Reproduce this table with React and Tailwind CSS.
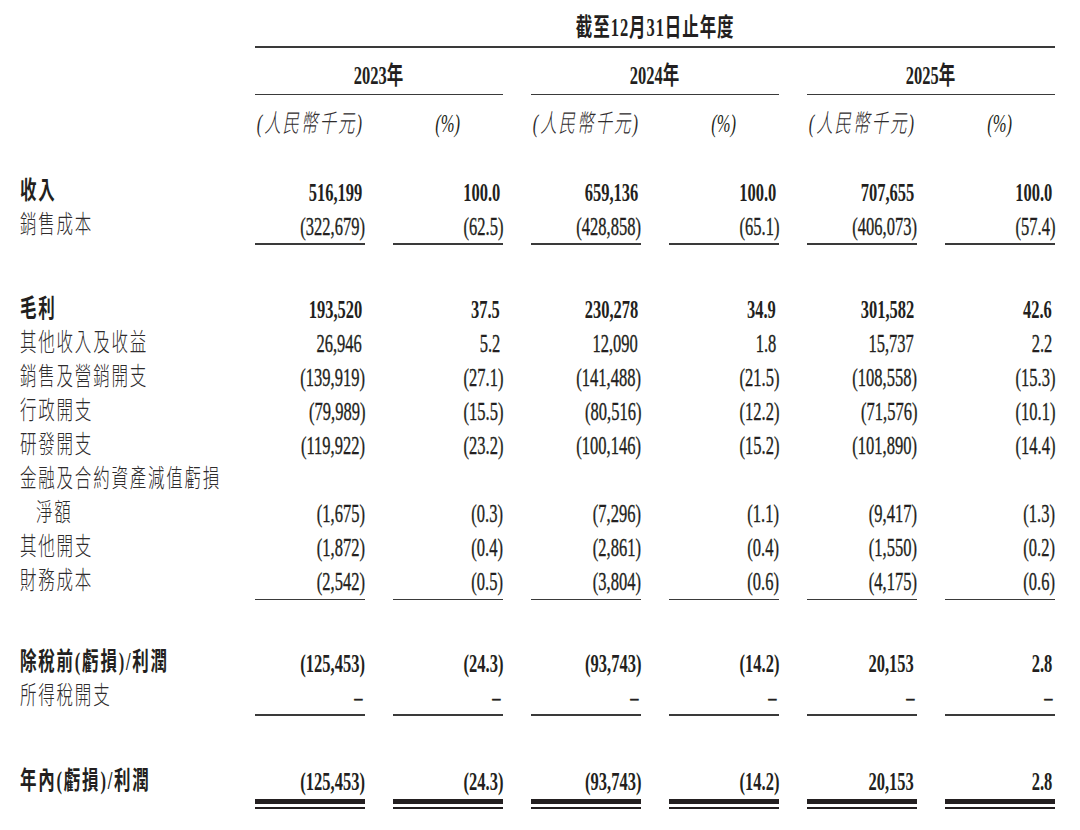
const rows1 = [
  { label: "收入", bold: true, v: ["516,199", "100.0", "659,136", "100.0", "707,655", "100.0"] },
  { label: "銷售成本", v: ["(322,679)", "(62.5)", "(428,858)", "(65.1)", "(406,073)", "(57.4)"] },
];

const rows2 = [
  { label: "毛利", bold: true, v: ["193,520", "37.5", "230,278", "34.9", "301,582", "42.6"] },
  { label: "其他收入及收益", v: ["26,946", "5.2", "12,090", "1.8", "15,737", "2.2"] },
  { label: "銷售及營銷開支", v: ["(139,919)", "(27.1)", "(141,488)", "(21.5)", "(108,558)", "(15.3)"] },
  { label: "行政開支", v: ["(79,989)", "(15.5)", "(80,516)", "(12.2)", "(71,576)", "(10.1)"] },
  { label: "研發開支", v: ["(119,922)", "(23.2)", "(100,146)", "(15.2)", "(101,890)", "(14.4)"] },
  { label: "金融及合約資產減值虧損", v: [] },
  { label: "淨額", indent: true, v: ["(1,675)", "(0.3)", "(7,296)", "(1.1)", "(9,417)", "(1.3)"] },
  { label: "其他開支", v: ["(1,872)", "(0.4)", "(2,861)", "(0.4)", "(1,550)", "(0.2)"] },
  { label: "財務成本", v: ["(2,542)", "(0.5)", "(3,804)", "(0.6)", "(4,175)", "(0.6)"] },
];

const rows3 = [
  { label: "除稅前(虧損)/利潤", bold: true, v: ["(125,453)", "(24.3)", "(93,743)", "(14.2)", "20,153", "2.8"] },
  { label: "所得稅開支", v: ["–", "–", "–", "–", "–", "–"] },
];

const rows4 = [
  { label: "年內(虧損)/利潤", bold: true, v: ["(125,453)", "(24.3)", "(93,743)", "(14.2)", "20,153", "2.8"] },
];

const grid = "grid grid-cols-[227px_repeat(6,110px)] gap-x-[28px]";

function Num({ v, bold }) {
  const paren = v.startsWith("(");
  return (
    <div className={`flex justify-end ${paren ? "pr-0" : "pr-[3px]"}`}>
      <span
        className={`inline-block origin-right scale-x-[0.66] whitespace-nowrap text-[25px] leading-none ${
          bold ? "font-bold" : "font-normal [-webkit-text-stroke:0.35px_#231f20]"
        }`}
      >
        {v}
      </span>
    </div>
  );
}

function Row({ row }) {
  return (
    <div className={`${grid} h-[34px] items-center`}>
      <div className={`whitespace-nowrap ${row.indent ? "pl-[36px]" : "pl-[20px]"}`}>
        <span
          className={`inline-block origin-left scale-x-[0.66] text-[25px] leading-none tracking-[2.7px] ${
            row.bold ? "font-bold" : "font-light text-[#2e2b2c]"
          }`}
        >
          {row.label}
        </span>
      </div>
      {row.v.map((v, i) => (
        <Num key={i} v={v} bold={row.bold} />
      ))}
    </div>
  );
}

function Lines() {
  return (
    <div className={grid}>
      <div />
      {[0, 1, 2, 3, 4, 5].map((i) => (
        <div key={i} className="h-[1.5px] bg-[#3a3a3a]" />
      ))}
    </div>
  );
}

function DoubleLines() {
  return (
    <div className={grid}>
      <div />
      {[0, 1, 2, 3, 4, 5].map((i) => (
        <div key={i} className="h-[10px] border-t-[5px] border-b-2 border-[#231f20]" />
      ))}
    </div>
  );
}

export default function App() {
  return (
    <div className="w-[1080px] h-[830px] overflow-hidden bg-white pt-[8px] text-[#231f20] font-['Liberation_Serif','Noto_Sans_CJK_TC',serif]">
      {/* header */}
      <div className={grid}>
        <div className="col-start-2 col-span-6 h-[38px] flex items-center justify-center">
          <span className="inline-block origin-center scale-x-[0.66] text-[25px] font-bold leading-none tracking-[1.4px] whitespace-nowrap">
            截至12月31日止年度
          </span>
        </div>
        <div className="col-start-2 col-span-6 h-[1.5px] bg-[#3a3a3a]" />
        {["2023年", "2024年", "2025年"].map((y, i) => (
          <div
            key={y}
            className={`${i === 0 ? "col-start-2" : ""} col-span-2 h-[46px] pt-[10px] flex items-center justify-center`}
          >
            <span className="inline-block origin-center scale-x-[0.66] text-[25px] font-bold leading-none whitespace-nowrap">
              {y}
            </span>
          </div>
        ))}
        {[0, 1, 2].map((i) => (
          <div key={i} className={`${i === 0 ? "col-start-2" : ""} col-span-2 h-[1.5px] bg-[#3a3a3a]`} />
        ))}
        {[0, 1, 2].map((i) => [
          <div
            key={`a${i}`}
            className={`${i === 0 ? "col-start-2" : ""} h-[56px] flex items-center justify-center`}
          >
            <span className="inline-block origin-center scale-x-[0.66] text-[25px] italic font-light leading-none tracking-[3px] whitespace-nowrap text-[#2e2b2c]">
              (人民幣千元)
            </span>
          </div>,
          <div key={`b${i}`} className="h-[56px] flex items-center justify-center">
            <span className="inline-block origin-center scale-x-[0.66] text-[25px] italic leading-none whitespace-nowrap">
              (%)
            </span>
          </div>,
        ])}
      </div>

      {/* body */}
      <div className="mt-[24px]">
        {rows1.map((r) => (
          <Row key={r.label} row={r} />
        ))}
      </div>
      <Lines />

      <div className="mt-[48px]">
        {rows2.map((r) => (
          <Row key={r.label} row={r} />
        ))}
      </div>
      <Lines />

      <div className="mt-[46px]">
        {rows3.map((r) => (
          <Row key={r.label} row={r} />
        ))}
      </div>
      <Lines />

      <div className="mt-[49px]">
        {rows4.map((r) => (
          <Row key={r.label} row={r} />
        ))}
      </div>
      <DoubleLines />
    </div>
  );
}
